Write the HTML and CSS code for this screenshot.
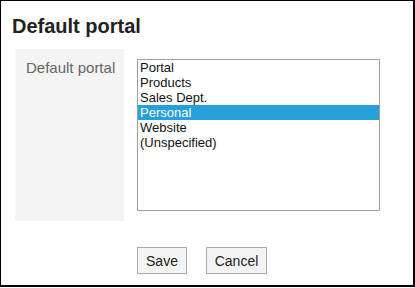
FILE: index.html
```html
<!DOCTYPE html>
<html>
<head>
<meta charset="utf-8">
<link rel="stylesheet" href="styles.css">
</head>
<body>
<div class="frame">
  <h1 class="title">Default portal</h1>
  <div class="row">
    <div class="label">Default portal</div>
    <div class="value">
      <div class="listbox">
        <div class="opt">Portal</div>
        <div class="opt">Products</div>
        <div class="opt">Sales Dept.</div>
        <div class="opt selected">Personal</div>
        <div class="opt">Website</div>
        <div class="opt">(Unspecified)</div>
      </div>
    </div>
  </div>
  <div class="actions">
    <button class="btn btn-save">Save</button>
    <button class="btn btn-cancel">Cancel</button>
  </div>
</div>
</body>
</html>
```
FILE: styles.css
```css
html, body {
  margin: 0;
  padding: 0;
  background: #fff;
}
.frame {
  box-sizing: border-box;
  width: 415px;
  height: 287px;
  border-style: solid;
  border-color: #000;
  border-width: 1px 2px 2px 1px;
  font-family: "Liberation Sans", Arial, sans-serif;
  color: #333;
}
.title {
  margin: 13px 0 0 11px;
  font-size: 20px;
  line-height: 24px;
  font-weight: bold;
  color: #222;
}
.row {
  display: flex;
  margin: 11px 0 0 14px;
}
.label {
  width: 109px;
  box-sizing: border-box;
  background: #f4f4f4;
  padding: 10px 0 0 11px;
  font-size: 15px;
  line-height: 18px;
  color: #666;
}
.value {
  padding: 10px 0 10px 13px;
}
.listbox {
  box-sizing: border-box;
  width: 243px;
  height: 152px;
  border: 1px solid #a0a0a0;
  background: #fff;
  font-size: 13px;
  line-height: 15px;
  color: #111;
}
.opt {
  padding: 0 2px 0 2px;
  height: 15px;
  white-space: nowrap;
}
.opt.selected {
  background: #26a0da;
  color: #fff;
}
.actions {
  display: flex;
  gap: 19px;
  margin: 26px 0 0 136px;
}
.btn {
  box-sizing: border-box;
  height: 27px;
  padding: 0;
  border: 1px solid #ababab;
  background: #f3f3f3;
  font-family: "Liberation Sans", Arial, sans-serif;
  font-size: 14px;
  color: #222;
  border-radius: 0;
}
.btn-save { width: 50px; }
.btn-cancel { width: 61px; }
```
